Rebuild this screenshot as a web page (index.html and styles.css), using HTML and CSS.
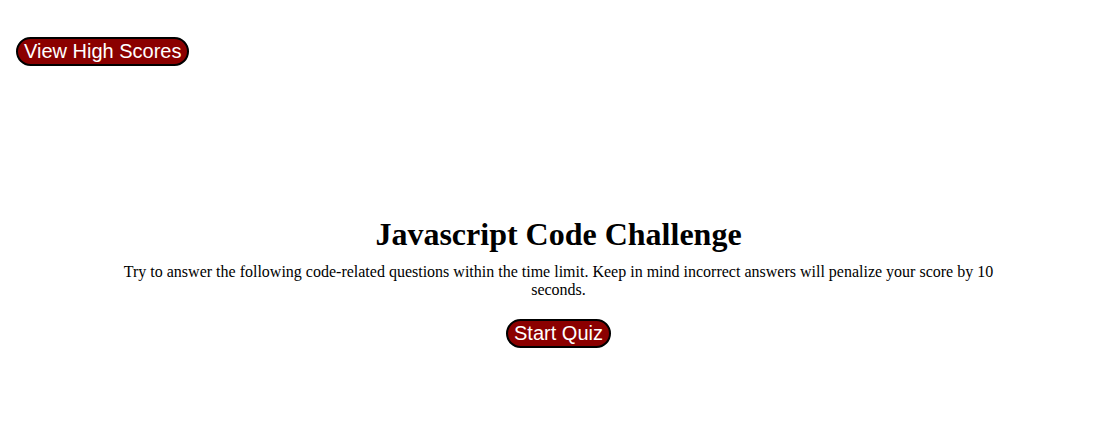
FILE: index.html
```html
<!DOCTYPE html>
<html lang="en">
<head>
<meta charset="utf-8">
<title>Javascript Code Challenge</title>
<link rel="stylesheet" href="styles.css">
</head>
<body>
<header class="top-bar">
<button class="btn" type="button">View High Scores</button>
</header>
<main class="intro">
<h1 class="title">Javascript Code Challenge</h1>
<p class="description">Try to answer the following code-related questions within the time limit. Keep in mind incorrect answers will penalize your score by 10 seconds.</p>
<button class="btn" type="button">Start Quiz</button>
</main>
</body>
</html>
```
FILE: styles.css
```css
* {
  box-sizing: border-box;
}

body {
  margin: 0;
  background: #fff;
  color: #000;
  font-family: "Liberation Serif", "Times New Roman", serif;
}

.top-bar {
  padding: 37px 16px 0;
}

.btn {
  display: inline-block;
  padding: 1px 6px;
  border: 2px solid #000;
  border-radius: 20px;
  background: #8b0000;
  color: #fff;
  font-family: "Liberation Sans", Arial, sans-serif;
  font-size: 20px;
  line-height: 23px;
}

.intro {
  margin-top: 150px;
  padding: 0 100px 0 118px;
  text-align: center;
}

.title {
  margin: 0 0 10px;
  font-size: 32px;
  line-height: 37px;
}

.description {
  margin: 0 0 20px;
  font-size: 16px;
  line-height: 18px;
}
```
